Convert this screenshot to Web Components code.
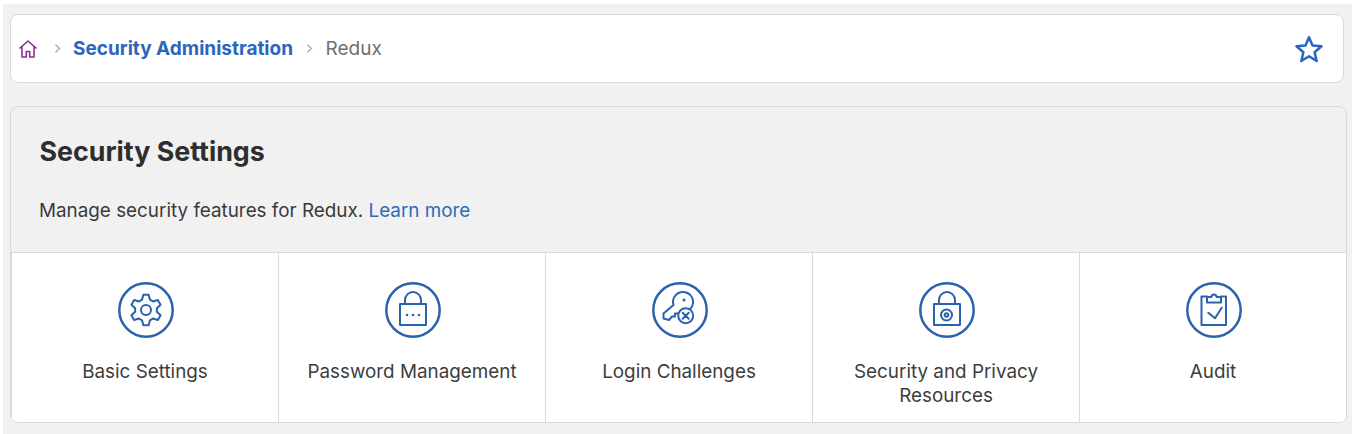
<!DOCTYPE html>
<html>
<head>
<meta charset="utf-8">
<title>Security Settings</title>
<style>
  html, body { margin: 0; background: #fff; }
  body { font-family: Inter, "Liberation Sans", sans-serif; color: #333; overflow: hidden; }
</style>
</head>
<body>
<sec-page>
  <sec-breadcrumb current="Redux">
    <a slot="link">Security Administration</a>
  </sec-breadcrumb>
  <sec-panel heading="Security Settings">
    <span slot="intro">Manage security features for Redux. </span>
    <sec-tile icon="gear">Basic Settings</sec-tile>
    <sec-tile icon="lock">Password Management</sec-tile>
    <sec-tile icon="key">Login Challenges</sec-tile>
    <sec-tile icon="privacy">Security and Privacy Resources</sec-tile>
    <sec-tile icon="audit">Audit</sec-tile>
  </sec-panel>
</sec-page>

<script>
const pageTemplate = `
  <style>
    :host{
      display:flex;
      flex-direction:column;
      gap:23px;
      height:430px;
      box-sizing:border-box;
      margin:4px 0 0 3px;
      padding:10px 5px 0 7px;
      background:#f1f1f1;
    }
  </style>
  <slot></slot>
`;

class SecPage extends HTMLElement {
  constructor() {
    super();
    this.attachShadow({ mode: 'open' });
    this.shadowRoot.innerHTML = pageTemplate;
  }
}

const breadcrumbTemplate = `
  <style>
    :host{
      display:flex;
      align-items:center;
      height:69px;
      box-sizing:border-box;
      margin-right:3px;
      padding:0 19px 0 7px;
      background:#fff;
      border:1px solid #d9d9d9;
      border-radius:8px;
      font-size:19px;
    }
    .home{ width:20px; height:20px; flex:none; }
    .sep{ width:9px; height:9px; flex:none; margin:0 11px 0 15px; }
    .sep.second{ margin:0 11.5px 0 12px; }
    ::slotted(a){
      color:#2b65bd;
      font-weight:700;
      white-space:nowrap;
    }
    #current{ color:#6f6f6f; white-space:nowrap; }
    .star{ width:30px; height:30px; flex:none; margin-left:auto; }
  </style>
  <svg class="home" viewBox="0 0 20 20" fill="none" stroke="#8b2c8f" stroke-width="1.600" stroke-linejoin="round">
    <path d="M1.500 9.500 10 2l8.500 7.500M4 7.600V18h4.300v-5.500h3.400V18H16V7.600"/>
  </svg>
  <svg class="sep" viewBox="0 0 9 9" fill="none" stroke="#a3a3a3" stroke-width="1.200"><path d="M2.500 0.800 6.500 4.500 2.500 8.200"/></svg>
  <slot name="link"></slot>
  <svg class="sep second" viewBox="0 0 9 9" fill="none" stroke="#a3a3a3" stroke-width="1.200"><path d="M2.500 0.800 6.500 4.500 2.500 8.200"/></svg>
  <span id="current"></span>
  <svg class="star" viewBox="0 0 30 30" fill="none" stroke="#2b65bd" stroke-width="2.500" stroke-linejoin="round">
    <path d="M15 3.200 18.500 11.600 27.500 12.300 20.600 18.200 22.700 27 15 22.300 7.300 27 9.400 18.200 2.500 12.300 11.500 11.600Z"/>
  </svg>
`;

class SecBreadcrumb extends HTMLElement {
  constructor() {
    super();
    this.attachShadow({ mode: 'open' });
    this.shadowRoot.innerHTML = breadcrumbTemplate;
    this.shadowRoot.getElementById('current').textContent = this.getAttribute('current');
  }
}

const panelTemplate = `
  <style>
    :host{
      display:block;
      box-sizing:border-box;
      height:317px;
      background:#f1f1f1;
      border:1px solid #d9d9d9;
      border-radius:8px;
      overflow:hidden;
    }
    header{
      height:146px;
      box-sizing:border-box;
      padding:27px 28px 0;
      border-bottom:1px solid #d9d9d9;
    }
    h1{
      margin:0 0 0 0.500px;
      font-size:26.800px;
      line-height:34px;
      font-weight:700;
      color:#2e2e2e;
    }
    p{
      margin:31px 0 0;
      font-size:18.850px;
      line-height:24px;
      color:#3a3a3a;
    }
    a{ color:#2b6cb8; }
    main{
      display:grid;
      grid-template-columns:repeat(5,1fr);
      height:169px;
      background:#fff;
    }
  </style>
  <header>
    <h1 id="heading"></h1>
    <p><slot name="intro"></slot><a>Learn more</a></p>
  </header>
  <main>
    <slot></slot>
  </main>
`;

class SecPanel extends HTMLElement {
  constructor() {
    super();
    this.attachShadow({ mode: 'open' });
    this.shadowRoot.innerHTML = panelTemplate;
    this.shadowRoot.getElementById('heading').textContent = this.getAttribute('heading');
  }
}

// six toothed cog, points worked out around the centre of the 56 box
function gearPath() {
  const spots = [];
  for (let i = 0; i < 6; i++) {
    const a = i * 60 - 90;
    [[11, a - 21], [15.5, a - 10], [15.5, a + 10], [11, a + 21]].forEach(([r, deg]) => {
      const rad = deg * Math.PI / 180;
      spots.push((28 + r * Math.cos(rad)).toFixed(2) + ' ' + (28 + r * Math.sin(rad)).toFixed(2));
    });
  }
  return 'M' + spots.join('L') + 'Z';
}

const tileIcons = {
  gear: `<path d="${gearPath()}"/><circle cx="28" cy="28" r="5"/>`,
  lock: `<rect x="15" y="22" width="26" height="21"/><path d="M20 22v-4a8 8 0 0 1 16 0v4"/><g fill="#2a62ad" stroke="none"><circle cx="22" cy="33" r="1.300"/><circle cx="28" cy="33" r="1.300"/><circle cx="34" cy="33" r="1.300"/></g>`,
  key: `<path d="M11.500 31.500 21.500 23A10 10 0 1 1 28 29.500L26 31.500h-3v3h-3l-3 3.500-5.500-1.500z"/><circle cx="32" cy="18" r="1.500" fill="#2a62ad" stroke="none"/><circle cx="33.700" cy="33.700" r="7.500" fill="#fff"/><path d="M30.700 30.700l6 6M36.700 30.700l-6 6"/>`,
  privacy: `<rect x="15" y="22" width="26" height="21"/><path d="M20 22v-4a8 8 0 0 1 16 0v4"/><circle cx="27.500" cy="33" r="5.500"/><circle cx="27.500" cy="33" r="1.800"/>`,
  audit: `<path d="M21 14.500h-5.500V43H40V14.500h-5"/><path d="M21 20.500v-5.500h4.500a2.500 2.500 0 0 1 5 0H35v5.500z"/><path d="M22.300 30.700l6.700 5.600 6.700-10.600"/>`
};

const tileTemplate = `
  <style>
    :host{
      display:flex;
      flex-direction:column;
      align-items:center;
      box-sizing:border-box;
      padding:29px 24px 0;
      background:#fff;
      border-left:1px solid #d9d9d9;
      text-align:center;
      font-size:18.850px;
      line-height:24px;
      color:#3d3d3d;
    }
    :host(:first-child){ border-left:0; }
    svg{ width:56px; height:56px; flex:none; margin:0 0 22px 2px; }
  </style>
  <svg viewBox="0 0 56 56" fill="none" stroke="#2a62ad" stroke-width="2" stroke-linejoin="round" stroke-linecap="round">
    <circle cx="28" cy="28" r="26.700" stroke-width="2.500"/>
    <g id="glyph"></g>
  </svg>
  <slot></slot>
`;

class SecTile extends HTMLElement {
  constructor() {
    super();
    this.attachShadow({ mode: 'open' });
    this.shadowRoot.innerHTML = tileTemplate;
    this.shadowRoot.getElementById('glyph').innerHTML = tileIcons[this.getAttribute('icon')];
  }
}

customElements.define('sec-page', SecPage);
customElements.define('sec-breadcrumb', SecBreadcrumb);
customElements.define('sec-panel', SecPanel);
customElements.define('sec-tile', SecTile);
</script>
</body>
</html>
